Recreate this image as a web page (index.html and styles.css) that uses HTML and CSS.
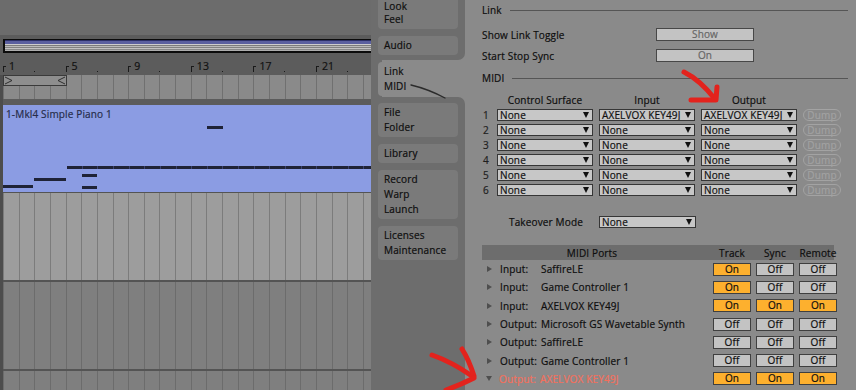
FILE: index.html
```html
<!DOCTYPE html>
<html lang="en">
<head>
    <meta charset="UTF-8">
    <title>Preferences - Link / MIDI</title>
    <link rel="stylesheet" href="styles.css">
</head>
<body>
    <!-- arrangement view behind the preferences window -->
    <div class="arrange">
        <div class="arrange-top"></div>
        <div class="overview-row"><div class="overview"></div></div>
        <div class="ruler">
            <span class="bar">1</span>
            <span class="bar">5</span>
            <span class="bar">9</span>
            <span class="bar">13</span>
            <span class="bar">17</span>
            <span class="bar">21</span>
        </div>
        <div class="loop-row">
            <div class="loop-brace">
                <svg width="63" height="11" viewBox="0 0 63 11">
                    <polyline points="1,2 8,5.5 1,9" fill="none" stroke="#2e2e2e" stroke-width="1"/>
                    <polyline points="61,2 54,5.5 61,9" fill="none" stroke="#2e2e2e" stroke-width="1"/>
                </svg>
            </div>
        </div>
        <div class="clip">
            <span class="clip-name">1-Mkl4 Simple Piano 1</span>
            <i class="note" style="left:204px;top:21px;width:16px"></i>
            <i class="note long" style="left:64px;top:61px;width:310px"></i>
            <i class="note" style="left:79px;top:69px;width:15px"></i>
            <i class="note" style="left:31px;top:73px;width:32px"></i>
            <i class="note" style="left:0;top:80px;width:30px"></i>
            <i class="note" style="left:79px;top:81px;width:15px"></i>
        </div>
        <div class="track track-light"></div>
        <div class="track track-dark"></div>
        <div class="track track-dark track-last"></div>
    </div>

    <!-- preference tabs -->
    <nav class="tabs">
        <div class="tab-group top">
            <div class="tab first">Look<br>Feel</div>
            <div class="tab">Audio</div>
        </div>
        <div class="tab-current-row">
            <div class="tab current">Link<br>MIDI</div>
        </div>
        <div class="tab-group bottom">
            <div class="tab">File<br>Folder</div>
            <div class="tab">Library</div>
            <div class="tab">Record<br>Warp<br>Launch</div>
            <div class="tab">Licenses<br>Maintenance</div>
        </div>
    </nav>

    <!-- preference page -->
    <main class="prefs">
        <div class="group-head">Link</div>
        <div class="pref-row">
            <span class="pref-label">Show Link Toggle</span>
            <span class="toggle">Show</span>
        </div>
        <div class="pref-row">
            <span class="pref-label">Start Stop Sync</span>
            <span class="toggle">On</span>
        </div>

        <div class="group-head midi-head">MIDI</div>
        <div class="midi-grid">
            <span></span>
            <span class="col-head">Control Surface</span>
            <span class="col-head">Input</span>
            <span class="col-head">Output</span>
            <span></span>

            <span class="num">1</span>
            <span class="select">None</span>
            <span class="select">AXELVOX KEY49J</span>
            <span class="select">AXELVOX KEY49J</span>
            <span class="dump">Dump</span>

            <span class="num">2</span>
            <span class="select">None</span>
            <span class="select">None</span>
            <span class="select">None</span>
            <span class="dump">Dump</span>

            <span class="num">3</span>
            <span class="select">None</span>
            <span class="select">None</span>
            <span class="select">None</span>
            <span class="dump">Dump</span>

            <span class="num">4</span>
            <span class="select">None</span>
            <span class="select">None</span>
            <span class="select">None</span>
            <span class="dump">Dump</span>

            <span class="num">5</span>
            <span class="select">None</span>
            <span class="select">None</span>
            <span class="select">None</span>
            <span class="dump">Dump</span>

            <span class="num">6</span>
            <span class="select">None</span>
            <span class="select">None</span>
            <span class="select">None</span>
            <span class="dump">Dump</span>
        </div>

        <div class="takeover">
            <span class="takeover-label">Takeover Mode</span>
            <span class="select">None</span>
        </div>

        <div class="ports">
            <div class="ports-head">
                <span class="ports-title">MIDI Ports</span>
                <span>Track</span>
                <span>Sync</span>
                <span>Remote</span>
            </div>
            <div class="port">
                <span class="port-name"><i class="caret"></i><span class="port-kind">Input:</span>SaffireLE</span>
                <span class="btn on">On</span><span class="btn">Off</span><span class="btn">Off</span>
            </div>
            <div class="port">
                <span class="port-name"><i class="caret"></i><span class="port-kind">Input:</span>Game Controller 1</span>
                <span class="btn on">On</span><span class="btn">Off</span><span class="btn">Off</span>
            </div>
            <div class="port">
                <span class="port-name"><i class="caret"></i><span class="port-kind">Input:</span>AXELVOX KEY49J</span>
                <span class="btn on">On</span><span class="btn on">On</span><span class="btn on">On</span>
            </div>
            <div class="port">
                <span class="port-name"><i class="caret"></i><span class="port-kind">Output:</span>Microsoft GS Wavetable Synth</span>
                <span class="btn">Off</span><span class="btn">Off</span><span class="btn">Off</span>
            </div>
            <div class="port">
                <span class="port-name"><i class="caret"></i><span class="port-kind">Output:</span>SaffireLE</span>
                <span class="btn">Off</span><span class="btn">Off</span><span class="btn">Off</span>
            </div>
            <div class="port">
                <span class="port-name"><i class="caret"></i><span class="port-kind">Output:</span>Game Controller 1</span>
                <span class="btn">Off</span><span class="btn">Off</span><span class="btn">Off</span>
            </div>
            <div class="port open">
                <span class="port-name"><i class="caret down"></i><span class="port-kind">Output:</span>AXELVOX KEY49J</span>
                <span class="btn on">On</span><span class="btn on">On</span><span class="btn on">On</span>
            </div>
        </div>
    </main>

    <!-- hand drawn marks on top of the screenshot -->
    <svg class="marks" width="856" height="390" viewBox="0 0 856 390">
        <path d="M411 85 Q428 89 445 98" fill="none" stroke="#2b2b2b" stroke-width="1.4" stroke-linecap="round"/>
        <g fill="none" stroke="#e3231d" stroke-width="5" stroke-linecap="round" stroke-linejoin="round">
            <path d="M684 72 Q700 80 715 99"/>
            <path d="M717 87 L716 100 L691 100"/>
            <path d="M432 355 Q452 362 472 376"/>
            <path d="M462 349 Q469 360 474 376"/>
            <path d="M474 378 Q460 385 446 390"/>
        </g>
    </svg>
</body>
</html>
```

FILE: styles.css
```css
:root {
    --panel: #8a8a8a;
    --side: #6d6d6d;
    --tab: #7a7a7a;
    --ink: #0e0e0e;
    --band: #5c5c5c;
    --clip: #8b9ce3;
    --on: #fdb02e;
    --off: #c3c3c3;
}

* {
    box-sizing: border-box;
}

body {
    margin: 0;
    width: 856px;
    height: 390px;
    overflow: hidden;
    position: relative;
    display: flex;
    background: var(--panel);
    font-family: "Open Sans", "Liberation Sans", sans-serif;
    font-size: 10px;
    font-weight: 500;
    letter-spacing: 0.15px;
    color: var(--ink);
    -webkit-text-stroke: 0.2px currentColor;
}

/* arrangement */

.arrange {
    width: 371px;
    flex: none;
    display: flex;
    flex-direction: column;
    background: #4d4d4d;
    overflow: hidden;
}

.arrange-top {
    height: 35px;
    background: #6c6c6c;
}

.overview-row {
    height: 18px;
    padding: 4px 0 0 3px;
    background: var(--band);
}

.overview {
    width: 400px;
    height: 14px;
    border: 2px solid #0c0c0c;
    border-top-width: 1px;
    border-right: none;
    background: linear-gradient(#2b2f66 0 1px, #5a5f9f 1px 4px, #cdcdcd 4px 5px, #7c7c7c 5px 6px,
        #bababa 6px 7px, #828282 7px 8px, #c2c2c2 8px 9px, #8a8a8a 9px 10px, #adadad 10px 11px);
}

.ruler {
    height: 22px;
    display: flex;
    align-items: flex-end;
    padding: 0 0 3px 3px;
    background: var(--band);
    line-height: 11px;
}

.bar {
    position: relative;
    flex: none;
    width: 62.6px;
    padding-left: 6px;
    font-size: 10.5px;
    color: #111;
}

.bar::before {
    content: "";
    position: absolute;
    left: 0;
    bottom: 0;
    width: 2px;
    height: 5px;
    border-left: 1px solid #1a1a1a;
    border-top: 1px solid #1a1a1a;
}

.bar::after {
    content: "";
    position: absolute;
    left: 31px;
    bottom: 0;
    width: 1px;
    height: 1px;
    background: #1a1a1a;
}

.loop-row,
.track {
    margin-left: 3px;
    background-image: repeating-linear-gradient(90deg, var(--line) 0 1px, transparent 1px 15.65px);
}

.loop-row {
    --line: #707070;
    height: 30px;
    background-color: #8a8a8a;
    border-bottom: 6px solid var(--band);
}

.loop-brace {
    width: 64px;
    height: 11px;
    border: 1px solid #3a3a3a;
    background: #8e8e8e;
    line-height: 0;
}

.loop-brace svg {
    margin-top: -1px;
}

.clip {
    position: relative;
    height: 87px;
    margin-left: 3px;
    background: var(--clip);
}

.clip-name {
    display: block;
    padding: 2px 0 0 3px;
    font-size: 10px;
    line-height: 14px;
    color: #262c4a;
}

.note {
    position: absolute;
    height: 3px;
    background: #1f2337;
}

.note.long {
    background: repeating-linear-gradient(90deg, #1f2337 0 14.65px, #3b4270 14.65px 15.65px);
}

.track {
    border-top: 1px solid #545454;
}

.track-light {
    --line: #7c7c7c;
    height: 88px;
    background-color: #9d9d9d;
}

.track-dark {
    --line: #6c6c6c;
    height: 89px;
    background-color: #7f7f7f;
    border-top-width: 2px;
}

.track-last {
    flex: 1;
}

/* tabs column */

.tabs {
    width: 95px;
    flex: none;
    display: flex;
    flex-direction: column;
    background: var(--panel);
}

.tab-group {
    display: flex;
    flex-direction: column;
    gap: 7px;
    margin-right: 1px;
    padding: 0 7px 5px 7px;
    background: var(--side);
}

.tab-group.top {
    border-bottom-right-radius: 7px;
}

.tab-group.bottom {
    flex: 1;
    padding-top: 6px;
    border-top-right-radius: 7px;
}

.tab {
    padding: 2px 6px;
    border-radius: 4px;
    background: var(--tab);
    line-height: 15px;
}

/* first tab is scrolled partly out of view */
.tab.first {
    padding: 0 6px 3px;
    line-height: 13px;
    border-top-left-radius: 0;
    border-top-right-radius: 0;
}

.tab-current-row {
    padding: 2px 0 1px 7px;
    background: linear-gradient(90deg, var(--side) 0 11px, transparent 11px);
}

.tab.current {
    background: var(--panel);
    border-radius: 4px 0 0 4px;
}

/* preference page */

.prefs {
    flex: 1;
    padding: 3px 8px 0 16px;
}

.group-head {
    display: flex;
    align-items: center;
    gap: 8px;
    height: 14px;
    line-height: 14px;
}

.group-head::after {
    content: "";
    flex: 1;
    height: 1px;
    background: #555;
}

.pref-row {
    display: flex;
    align-items: center;
    height: 13px;
    margin-top: 8px;
}

.group-head + .pref-row {
    margin-top: 11px;
}

.pref-label {
    width: 174px;
}

.toggle {
    width: 98px;
    height: 13px;
    line-height: 11px;
    border: 1px solid #474747;
    background: var(--off);
    color: #666;
    text-align: center;
}

.midi-head {
    margin-top: 9px;
}

.midi-grid {
    display: grid;
    grid-template-columns: 9px 96px 96px 96px 38px;
    grid-template-rows: 14px;
    grid-auto-rows: 12px;
    column-gap: 6px;
    row-gap: 3px;
    margin-top: 7px;
    align-items: center;
}

.col-head {
    text-align: center;
    line-height: 14px;
}

.midi-grid > :nth-child(-n+5) {
    height: 14px;
    margin-bottom: -2px;
}

.num {
    padding-left: 1px;
    color: #1e1e1e;
}

.select {
    position: relative;
    display: block;
    height: 12px;
    padding: 0 10px 0 2px;
    border: 1px solid #363636;
    background: #c7c7c7;
    line-height: 10px;
    white-space: nowrap;
    overflow: hidden;
    color: #111;
}

.select::after {
    content: "";
    position: absolute;
    right: 3px;
    top: 2px;
    border-top: 6px solid #111;
    border-left: 3.5px solid transparent;
    border-right: 3.5px solid transparent;
}

.dump {
    height: 12px;
    border: 1px solid #a3a3a3;
    border-radius: 7px;
    color: #a2a2a2;
    line-height: 10px;
    text-align: center;
}

.takeover {
    display: flex;
    align-items: center;
    margin-top: 19px;
    padding-left: 27px;
}

.takeover-label {
    width: 90px;
}

.takeover .select {
    width: 97px;
}

.ports {
    margin-top: 16px;
    width: 352px;
}

.ports-head,
.port {
    display: grid;
    grid-template-columns: 226px 38px 38px 38px;
    column-gap: 5px;
    align-items: center;
    padding-right: 2px;
}

.ports-head {
    height: 15px;
    background: #6d6d6d;
    text-align: center;
}

.ports-title {
    padding-right: 6px;
}

.port {
    height: 18.3px;
}

.port-name {
    display: flex;
    align-items: center;
    padding-left: 5px;
    white-space: nowrap;
}

.caret {
    width: 0;
    height: 0;
    margin-right: 8px;
    border-left: 5px solid #4e4e4e;
    border-top: 3.5px solid transparent;
    border-bottom: 3.5px solid transparent;
}

.caret.down {
    margin-left: -1px;
    margin-right: 7px;
    border-top: 5px solid #4e4e4e;
    border-left: 3.5px solid transparent;
    border-right: 3.5px solid transparent;
    border-bottom: none;
}

.port-kind {
    min-width: 37px;
    margin-right: 4px;
}

.port.open .port-name {
    color: #f2705d;
}

.btn {
    height: 13px;
    line-height: 11px;
    border: 1px solid #3f3f3f;
    background: var(--off);
    text-align: center;
}

.btn.on {
    background: var(--on);
}

.marks {
    position: absolute;
    top: 0;
    left: 0;
    pointer-events: none;
}
```
